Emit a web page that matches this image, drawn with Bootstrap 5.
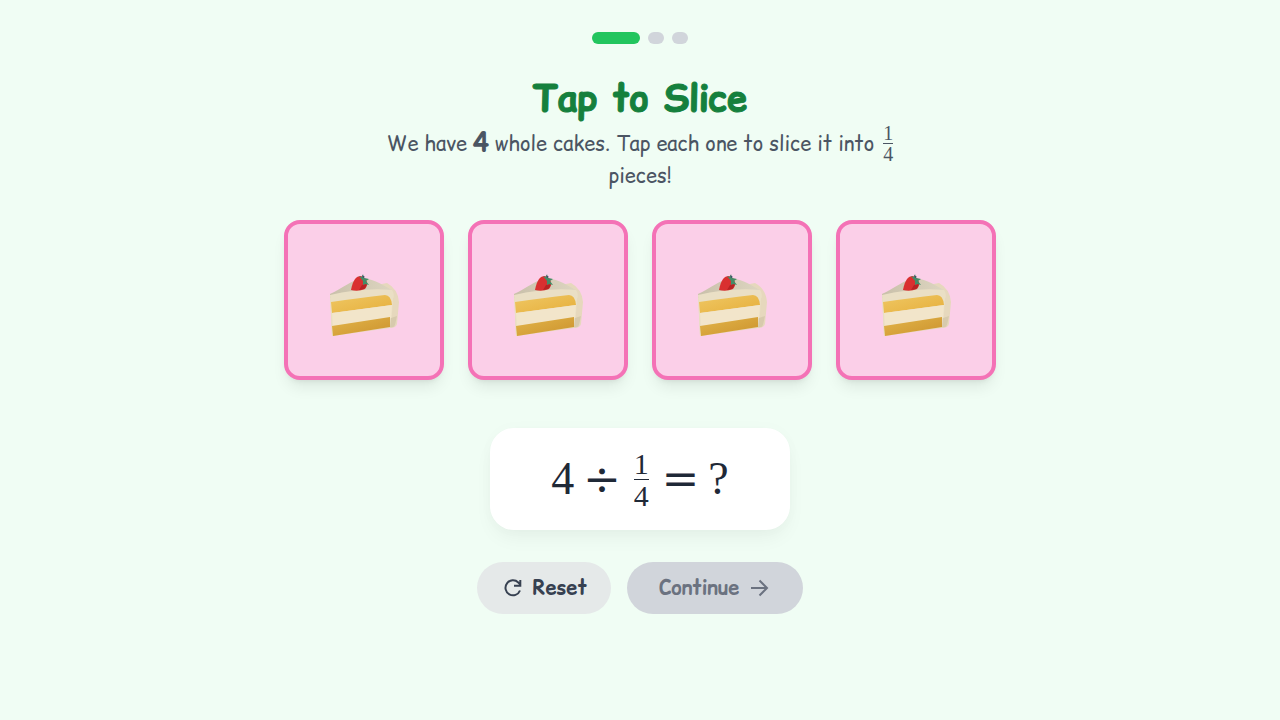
<!DOCTYPE html>
<html lang="en">
<head>
<meta charset="utf-8">
<meta name="viewport" content="width=device-width, initial-scale=1">
<title>Tap to Slice</title>
<link href="https://cdn.jsdelivr.net/npm/bootstrap@5.3.0/dist/css/bootstrap.min.css" rel="stylesheet">
<style>
  body { background: #f0fdf4; color: #4b5563; font-family: "Comic Sans MS", "Comic Relief", "Comic Neue", Lato, sans-serif; }
  .lesson { max-width: 896px; }
  .step { width: 16px; height: 12px; background: #d1d5db; }
  .step.current { width: 48px; background: #22c55e; }
  .title { color: #15803d; font-size: 36px; line-height: 44px; font-weight: 800; -webkit-text-stroke: 1px currentColor; }
  .intro { max-width: 512px; font-size: 20px; line-height: 32px; font-weight: 400; }
  .intro .count { font-size: 26px; line-height: 24px; }
  .math { font-family: "Liberation Serif", serif; }
  .frac { display: inline-flex; flex-direction: column; vertical-align: middle; text-align: center; }
  .frac span + span { border-top: 1px solid currentColor; }
  .intro .frac { font-size: 20px; line-height: 20px; margin: -10px 0 -6px 3px; }
  .cake { width: 160px; height: 160px; background: #fbcfe8; border: 4px solid #f472b6; border-radius: 16px;
    box-shadow: 0 4px 6px -4px rgba(0,0,0,.1), 0 10px 15px -3px rgba(0,0,0,.08); }
  .equation { width: 300px; height: 102px; border-radius: 24px; color: #1f2937; font-size: 46px; line-height: 48px; gap: 10px;
    box-shadow: 0 10px 20px -3px rgba(0,0,0,.05), 0 0 16px rgba(0,0,0,.02); }
  .equation .frac { font-size: 30px; line-height: 31px; margin: 0 4px; }
  .sign { font-family: "DejaVu Math TeX Gyre", "Liberation Serif", serif; font-size: 45px; }
  .action { height: 52px; font-size: 20px; line-height: 28px; font-weight: 700; }
  .action.reset { background: #e5e9e9; color: #374151; padding: 0 24px; }
  .action.next, .action.next:disabled { background: #d1d5db; color: #6b7280; padding: 0 32px; opacity: 1; border: 0; }
</style>
</head>
<body>
<main class="lesson container d-flex flex-column align-items-center pt-4">
  <div class="d-flex gap-2 pt-2" aria-label="Step 1 of 3">
    <span class="step current rounded-pill"></span><span class="step rounded-pill"></span><span class="step rounded-pill"></span>
  </div>
  <h1 class="title text-center mt-4 mb-0 pt-2">Tap to Slice</h1>
  <p class="intro text-center mb-0 pt-2">We have <strong class="count">4</strong> whole cakes. Tap each one to slice it into
    <span class="frac math"><span>1</span><span>4</span></span> pieces!</p>

  <svg class="position-absolute" width="0" height="0" aria-hidden="true">
    <defs>
      <linearGradient id="sponge" x2="1" y2="1"><stop stop-color="#efc763"/><stop offset="1" stop-color="#e6af3c"/></linearGradient>
      <linearGradient id="base" x2="1" y2="1"><stop stop-color="#e3b54a"/><stop offset="1" stop-color="#cb922d"/></linearGradient>
      <linearGradient id="frosting" x2="1"><stop stop-color="#c9c0aa"/><stop offset="1" stop-color="#ddd5c0"/></linearGradient>
    </defs>
    <symbol id="slice" viewBox="-1 -5 90 80">
      <path fill="#e6d8bd" d="M10 29L67 18Q78 24 79 37L77 59Q76 63 70 63L12 71Z"/>
      <path fill="url(#frosting)" d="M10 29C23 23 32 15 43 13C55 14 66 22 72 25C49 25 29 29 10 33Z"/>
      <path fill="#eadfc5" d="M10 30C31 25 54 23 72 25Q75 29 73 34L71 62L12 71Z"/>
      <path fill="url(#sponge)" d="M11 37C30 34 48 32 65 30Q71 30 72 40L12 48Z"/>
      <path fill="#f2e5ca" d="M12 48L72 40L71 53L13 61Z"/>
      <path fill="url(#base)" d="M12 61L70 52L70 62L13 71Z"/>
      <path fill="#d7caad" d="M71 53L77 51L75 60Q74 63 70 62Z"/>
      <path fill="#d93030" d="M31 25C33 15 36 11 41 11C47 13 49 19 45 24Q38 27 31 25Z"/>
      <path fill="#b72323" d="M42 20L47 19Q46 23 44 24L39 25Z"/>
      <path fill="#448c67" d="M39 11L42 12L43 9L44 13L49 14L46 16L49 20L45 19L43 20L43 16Z"/>
      <path fill="#345064" d="M42 10L45 12L43 13Z"/>
    </symbol>
  </svg>
  <div class="d-flex flex-wrap justify-content-center gap-4 mt-4 pt-1">
    <button type="button" class="cake p-0 d-flex align-items-center justify-content-center" aria-label="Slice cake 1"><svg width="90" height="80"><use href="#slice"/></svg></button>
    <button type="button" class="cake p-0 d-flex align-items-center justify-content-center" aria-label="Slice cake 2"><svg width="90" height="80"><use href="#slice"/></svg></button>
    <button type="button" class="cake p-0 d-flex align-items-center justify-content-center" aria-label="Slice cake 3"><svg width="90" height="80"><use href="#slice"/></svg></button>
    <button type="button" class="cake p-0 d-flex align-items-center justify-content-center" aria-label="Slice cake 4"><svg width="90" height="80"><use href="#slice"/></svg></button>
  </div>

  <div class="equation math bg-white d-flex align-items-center justify-content-center mt-5">
    <span>4</span><span class="sign">÷</span><span class="frac"><span>1</span><span>4</span></span><span class="sign">=</span><span>?</span>
  </div>

  <div class="d-flex gap-3 mt-4 pt-2">
    <button type="button" class="action reset btn border-0 rounded-pill d-flex align-items-center gap-2">
      <svg width="24" height="24" viewBox="0 0 24 24" fill="none" stroke="currentColor" stroke-width="2"><path d="M19 14.5A7.5 7.5 0 1 1 17.3 6.5L19.3 8.5M19.3 4V9.8H13"/></svg>Reset
    </button>
    <button type="button" class="action next btn rounded-pill d-flex align-items-center gap-2" disabled>
      Continue<svg width="24" height="24" viewBox="0 0 24 24" fill="none" stroke="currentColor" stroke-width="2"><path d="M4 12H19M12.5 4.5L20 12L12.5 19.5"/></svg>
    </button>
  </div>
</main>
</body>
</html>
